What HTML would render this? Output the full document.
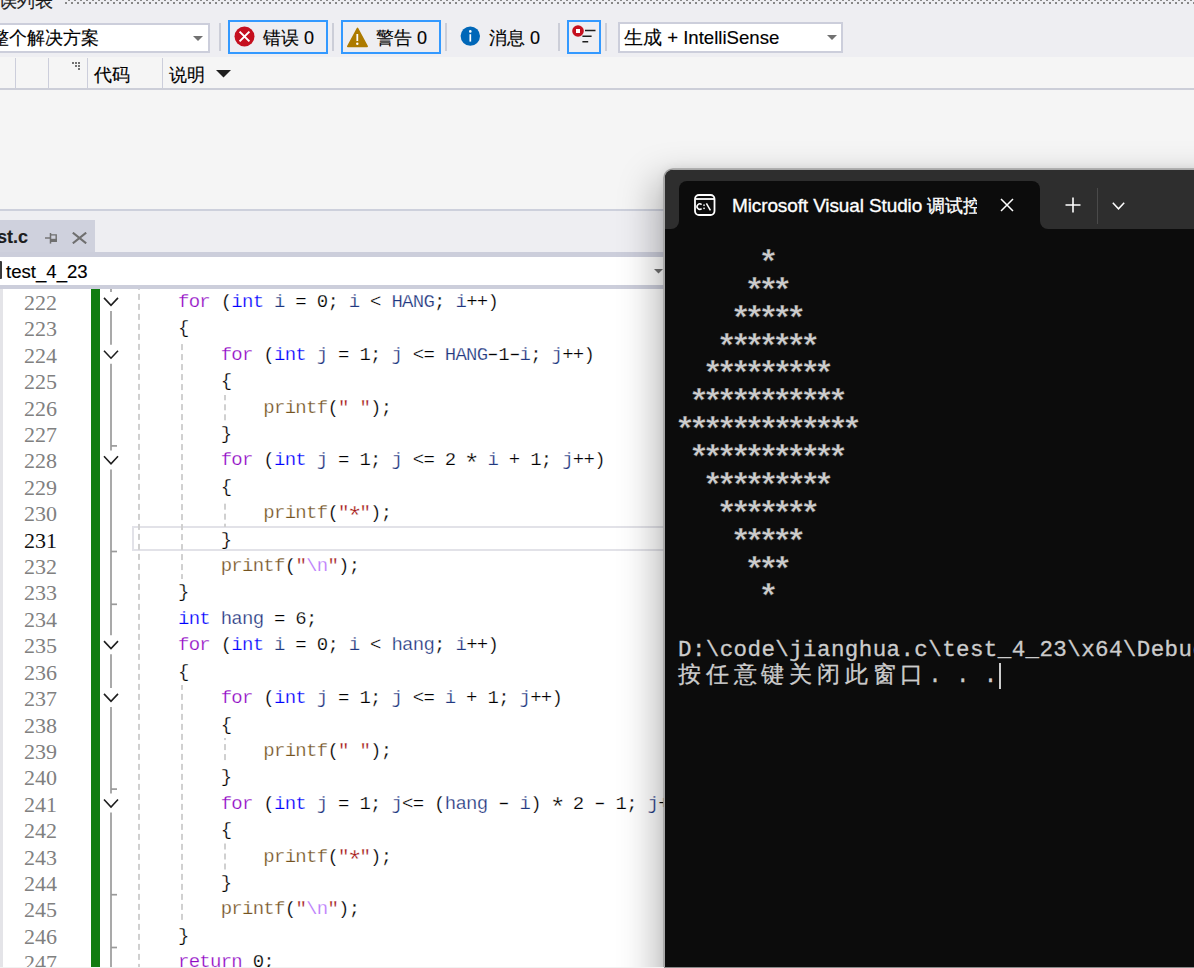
<!DOCTYPE html>
<html><head><meta charset="utf-8">
<style>
*{margin:0;padding:0;box-sizing:border-box}
html,body{width:1194px;height:968px;overflow:hidden;background:#f5f5f5;font-family:"Liberation Sans",sans-serif;position:relative}
.a{position:absolute}
#top{left:0;top:0;width:1194px;height:57px;background:#eeeef2}
.grip{left:64px;top:2px;width:1130px;height:2px;background-image:radial-gradient(circle,#8c8c94 0.6px,transparent 0.9px);background-size:4px 4px;background-position:0 -1px}
.ui{font-size:18px;color:#000;-webkit-text-stroke:0.15px #000;white-space:nowrap;line-height:20px}
.dd{background:#fff;border:2px solid #cccedb}
.sep{width:2px;background:#ccced8}
.btn{border:2px solid #3399ff}
#hdr{left:0;top:57px;width:1194px;height:32.5px;background:#f5f5f5;border-bottom:2px solid #ccced8}
.col{top:1px;width:1px;height:30px;background:#cccedb}
#split{left:0;top:209px;width:1194px;height:2px;background:#cdd0dc}
#tabrow{left:0;top:211px;width:1194px;height:41px;background:#eeeef2}
#tab{left:0;top:220px;width:95px;height:33px;background:#cfd1dd}
.strip{left:0;width:1194px;background:#cccedb}
#nav{left:0;top:257px;width:1194px;height:28px;background:#fff}
#editor{left:0;top:289px;width:1194px;height:679px;background:#fff}
.code{font-family:"Liberation Mono",monospace;font-size:19px;letter-spacing:-0.73px;white-space:pre;line-height:26.4px;color:#000;-webkit-text-stroke:0.25px #fff}
.ast{display:inline-block;transform:translateY(5px) scale(1.4)}.min{display:inline-block;transform:scaleX(1.6)}.kw{color:#8f08c4}.id{color:#1f377f}.ty{color:#0000ff}.fn{color:#74531f}.st{color:#a31515}.es{color:#b776fb}
.ln{font-family:"Liberation Serif",serif;font-size:22px;color:#808080;line-height:26.4px;text-align:right;white-space:pre}
#con{left:664px;top:169px;width:700px;height:850px;background:#0c0c0c;border-radius:9px 0 0 0;border-left:1px solid #a8a8a8;border-top:1px solid #a8a8a8;box-shadow:0 0 0 0.8px #a0a0a0,-10px 10px 36px rgba(0,0,0,0.26),0 0 10px rgba(0,0,0,0.08)}
.guide{width:2px;background-image:linear-gradient(#d0d0d0 60%,transparent 60%);background-size:2px 10px}
.ct{font-family:"Liberation Mono",monospace;font-size:22.5px;letter-spacing:0.4px;color:#cccccc;-webkit-text-stroke:0.3px #cccccc;white-space:pre;line-height:28px}
.cj{display:inline-block;width:27.8px;letter-spacing:0;font-size:23px}
.star{font-family:"Liberation Mono",monospace;font-size:34px;font-weight:bold;letter-spacing:-6.5px;margin-left:-3.2px;margin-top:5.5px;-webkit-text-stroke:0.35px #0c0c0c;color:#cccccc;white-space:pre;line-height:28px}
</style></head><body>
<div class="a" id="top">
  <div class="a ui" style="left:-1.5px;top:-9.5px;color:#1e1e1e">误列表</div>
  <svg class="a" style="left:64px;top:0" width="1130" height="6"><defs><pattern id="gp" width="6" height="6" patternUnits="userSpaceOnUse"><rect x="1" y="2" width="2" height="2" fill="#888"/><rect x="4" y="-1" width="2" height="2" fill="#888"/></pattern></defs><rect width="1130" height="6" fill="url(#gp)"/></svg>
  <div class="a dd" style="left:-20px;top:23px;width:230px;height:30px"></div>
  <div class="a ui" style="left:-9px;top:28px">整个解决方案</div>
  <svg class="a" style="left:193px;top:36px" width="10" height="6"><path d="M0 0H10L5 5Z" fill="#717171"/></svg>
  <div class="a sep" style="left:219px;top:23px;height:28px"></div>
  <div class="a btn" style="left:228px;top:20px;width:100px;height:34px"></div>
  <svg class="a" style="left:234px;top:26px" width="21" height="21"><circle cx="10.5" cy="10.5" r="10" fill="#c50f1f"/><path d="M5.6 5.6L15.4 15.4M15.4 5.6L5.6 15.4" stroke="#fff" stroke-width="2"/></svg>
  <div class="a ui" style="left:263px;top:28px">错误 0</div>
  <div class="a sep" style="left:332px;top:23px;height:28px"></div>
  <div class="a btn" style="left:341px;top:20px;width:100px;height:34px"></div>
  <svg class="a" style="left:346px;top:26px" width="23" height="22"><path d="M11.5 2.4L21.2 20.4H1.8Z" fill="#ad7b00" stroke="#ad7b00" stroke-width="1.6" stroke-linejoin="round"/><path d="M11.3 8V15" stroke="#fff" stroke-width="1.8"/><circle cx="11.3" cy="17.8" r="1.2" fill="#fff"/></svg>
  <div class="a ui" style="left:376px;top:28px">警告 0</div>
  <div class="a sep" style="left:445px;top:23px;height:28px"></div>
  <svg class="a" style="left:460px;top:26px" width="21" height="21"><circle cx="10.3" cy="10.1" r="9.7" fill="#0067b8"/><path d="M10.3 8.2V15.6" stroke="#fff" stroke-width="1.7"/><circle cx="10.3" cy="5.4" r="1.3" fill="#fff"/></svg>
  <div class="a ui" style="left:489px;top:28px">消息 0</div>
  <div class="a sep" style="left:558px;top:23px;height:28px"></div>
  <div class="a btn" style="left:567px;top:20px;width:34px;height:34px"></div>
  <svg class="a" style="left:571px;top:24px" width="28" height="24"><circle cx="7" cy="7" r="5.8" fill="#c50f1f"/><rect x="5" y="5" width="4" height="4" fill="#fff"/><path d="M14 6.5H24.5M11.4 12.3H20.6M11.4 17.8H17.2" stroke="#1e1e1e" stroke-width="1.5"/></svg>
  <div class="a sep" style="left:605px;top:23px;height:28px"></div>
  <div class="a dd" style="left:618px;top:22px;width:225px;height:31px"></div>
  <div class="a ui" style="left:624px;top:28px;font-size:18.6px">生成 + IntelliSense</div>
  <svg class="a" style="left:827px;top:35px" width="10" height="6"><path d="M0 0H10L5 5Z" fill="#717171"/></svg>
</div>
<div class="a" id="hdr">
  <div class="a col" style="left:15px"></div>
  <div class="a col" style="left:48px"></div>
  <div class="a col" style="left:87px"></div>
  <div class="a col" style="left:162px"></div>
  <svg class="a" style="left:72px;top:5px" width="9" height="8"><rect x="0" y="0" width="2" height="2" fill="#717171"/><rect x="3" y="0" width="2" height="2" fill="#717171"/><rect x="6" y="0" width="2" height="2" fill="#717171"/><rect x="3" y="3" width="2" height="2" fill="#717171"/><rect x="6" y="3" width="2" height="2" fill="#717171"/><rect x="6" y="6" width="2" height="2" fill="#717171"/></svg>
  <div class="a ui" style="left:94px;top:8px">代码</div>
  <div class="a ui" style="left:169px;top:8px">说明</div>
  <svg class="a" style="left:216px;top:13px" width="15" height="8"><path d="M0 0H15L7.5 7.5Z" fill="#1e1e1e"/></svg>
</div>
<div class="a" id="split"></div>
<div class="a" id="tabrow"></div>
<div class="a" id="tab">
  <div class="a ui" style="left:-3px;top:7px;font-weight:bold;color:#1e1e1e">st.c</div>
  <svg class="a" style="left:45px;top:12px" width="13" height="13"><path d="M0 6H5" stroke="#6f6f6f" stroke-width="1.4"/><path d="M5.5 1V11.6" stroke="#6f6f6f" stroke-width="1.5"/><path d="M5.5 2.9H11.2V9.3H5.5" stroke="#6f6f6f" stroke-width="1.4" fill="none"/><rect x="5.5" y="6.8" width="6.4" height="3" fill="#6f6f6f"/></svg>
  <svg class="a" style="left:72px;top:12px" width="15" height="12"><path d="M0.8 0.6L14.2 11.4M14.2 0.6L0.8 11.4" stroke="#6f6f6f" stroke-width="2"/></svg>
</div>
<div class="a strip" style="top:252px;height:5px"></div>
<div class="a" id="nav">
  <div class="a" style="left:-1px;top:4px;width:2.5px;height:18px;background:#3a3a3a;border-radius:1px"></div>
  <div class="a ui" style="left:6px;top:5px;font-size:18.6px">test_4_23</div>
  <svg class="a" style="left:654px;top:12px" width="9" height="5"><path d="M0 0H9L4.5 4.5Z" fill="#717171"/></svg>
</div>
<div class="a strip" style="top:285px;height:4px"></div>
<div class="a" id="editor">
<div class="a" style="left:0;top:0;width:3px;height:679px;background:#e4e4e8"></div>
<div class="a ln" style="left:0;top:1px;width:57px">222
223
224
225
226
227
228
229
230
<span style="color:#111">231</span>
232
233
234
235
236
237
238
239
240
241
242
243
244
245
246
247</div>
<div class="a" style="left:91px;top:0;width:9px;height:679px;background:#107c10"></div>
<div class="a" style="left:132px;top:237.1px;width:540px;height:25px;border:2px solid #e2e2e8"></div>
<svg class="a" style="left:100px;top:0" width="24" height="679"><path d="M11 0.0V3.0" stroke="#9a9a9a" stroke-width="1.7"/><path d="M11 22.0V55.8" stroke="#9a9a9a" stroke-width="1.7"/><path d="M11 74.8V161.4" stroke="#9a9a9a" stroke-width="1.7"/><path d="M11 180.4V346.2" stroke="#9a9a9a" stroke-width="1.7"/><path d="M11 365.2V399.0" stroke="#9a9a9a" stroke-width="1.7"/><path d="M11 418.0V504.6" stroke="#9a9a9a" stroke-width="1.7"/><path d="M11 523.6V679.0" stroke="#9a9a9a" stroke-width="1.7"/><path d="M4 8.9L11 16.4L18 8.9" stroke="#1e1e1e" stroke-width="1.6" fill="none"/><path d="M4 61.7L11 69.2L18 61.7" stroke="#1e1e1e" stroke-width="1.6" fill="none"/><path d="M4 167.3L11 174.8L18 167.3" stroke="#1e1e1e" stroke-width="1.6" fill="none"/><path d="M4 352.1L11 359.6L18 352.1" stroke="#1e1e1e" stroke-width="1.6" fill="none"/><path d="M4 404.9L11 412.4L18 404.9" stroke="#1e1e1e" stroke-width="1.6" fill="none"/><path d="M4 510.5L11 518.0L18 510.5" stroke="#1e1e1e" stroke-width="1.6" fill="none"/><path d="M11 156.9H17" stroke="#9a9a9a" stroke-width="1.7"/><path d="M11 262.5H17" stroke="#9a9a9a" stroke-width="1.7"/><path d="M11 315.3H17" stroke="#9a9a9a" stroke-width="1.7"/><path d="M11 500.1H17" stroke="#9a9a9a" stroke-width="1.7"/><path d="M11 605.7H17" stroke="#9a9a9a" stroke-width="1.7"/><path d="M11 658.5H17" stroke="#9a9a9a" stroke-width="1.7"/></svg>
<div class="a guide" style="left:138.0px;top:0.0px;height:686.4px;background-position:0 4.9px"></div>
<div class="a guide" style="left:181.0px;top:52.8px;height:237.6px;background-position:0 2.1px"></div>
<div class="a guide" style="left:181.0px;top:396.0px;height:237.6px;background-position:0 8.9px"></div>
<div class="a guide" style="left:223.5px;top:105.6px;height:26.4px;background-position:0 9.3px"></div>
<div class="a guide" style="left:223.5px;top:211.2px;height:26.4px;background-position:0 3.7px"></div>
<div class="a guide" style="left:223.5px;top:448.8px;height:26.4px;background-position:0 6.1px"></div>
<div class="a guide" style="left:223.5px;top:554.4px;height:26.4px;background-position:0 0.5px"></div>
<div class="a code" style="left:135.3px;top:0">    <span class="kw">for</span> (<span class="ty">int</span> <span class="id">i</span> = 0; <span class="id">i</span> &lt; <span class="id">HANG</span>; <span class="id">i</span>++)
    {
        <span class="kw">for</span> (<span class="ty">int</span> <span class="id">j</span> = 1; <span class="id">j</span> &lt;= <span class="id">HANG</span><span class="min">-</span>1<span class="min">-</span><span class="id">i</span>; <span class="id">j</span>++)
        {
            <span class="fn">printf</span>(<span class="st">" "</span>);
        }
        <span class="kw">for</span> (<span class="ty">int</span> <span class="id">j</span> = 1; <span class="id">j</span> &lt;= 2 <span class="ast">*</span> <span class="id">i</span> + 1; <span class="id">j</span>++)
        {
            <span class="fn">printf</span>(<span class="st">"<span class="ast">*</span>"</span>);
        }
        <span class="fn">printf</span>(<span class="st">"</span><span class="es">\n</span><span class="st">"</span>);
    }
    <span class="ty">int</span> <span class="id">hang</span> = 6;
    <span class="kw">for</span> (<span class="ty">int</span> <span class="id">i</span> = 0; <span class="id">i</span> &lt; <span class="id">hang</span>; <span class="id">i</span>++)
    {
        <span class="kw">for</span> (<span class="ty">int</span> <span class="id">j</span> = 1; <span class="id">j</span> &lt;= <span class="id">i</span> + 1; <span class="id">j</span>++)
        {
            <span class="fn">printf</span>(<span class="st">" "</span>);
        }
        <span class="kw">for</span> (<span class="ty">int</span> <span class="id">j</span> = 1; <span class="id">j</span>&lt;= (<span class="id">hang</span> <span class="min">-</span> <span class="id">i</span>) <span class="ast">*</span> 2 <span class="min">-</span> 1; <span class="id">j</span>++)
        {
            <span class="fn">printf</span>(<span class="st">"<span class="ast">*</span>"</span>);
        }
        <span class="fn">printf</span>(<span class="st">"</span><span class="es">\n</span><span class="st">"</span>);
    }
    <span class="kw">return</span> 0;</div>
</div>
<div class="a" id="con">
  <div class="a" style="left:0;top:0;width:540px;height:59px;background:#2e2e2e;border-radius:8px 0 0 0"></div>
  <div class="a" style="left:14px;top:11px;width:361px;height:61px;background:#0c0c0c;border-radius:8px 8px 0 0"></div>
  <div class="a" style="left:375px;top:51px;width:8px;height:8px;background:#0c0c0c"></div>
  <div class="a" style="left:375px;top:51px;width:8px;height:8px;background:#2e2e2e;border-radius:0 0 0 8px"></div>
  <div class="a" style="left:0px;top:51px;width:14px;height:8px;background:#0c0c0c"></div>
  <div class="a" style="left:0px;top:51px;width:14px;height:8px;background:#2e2e2e;border-radius:0 0 8px 0"></div>
  <svg class="a" style="left:29px;top:24px" width="22" height="22"><rect x="1" y="1" width="19.5" height="20" rx="4" fill="none" stroke="#fff" stroke-width="1.8"/><path d="M1.5 5H20" stroke="#fff" stroke-width="1.8"/><path d="M7.6 10.6A2.7 2.7 0 1 0 7.6 14.6" stroke="#fff" stroke-width="1.6" fill="none"/><rect x="9.3" y="10.4" width="1.5" height="1.5" fill="#fff"/><rect x="9.3" y="13.6" width="1.5" height="1.5" fill="#fff"/><path d="M12.4 9.4L16.4 16.4" stroke="#fff" stroke-width="1.5"/></svg>
  <div class="a" style="left:67px;top:25px;width:245px;overflow:hidden;font-size:19px;letter-spacing:-0.12px;line-height:22px;color:#fff;white-space:nowrap;-webkit-text-stroke:0.35px #fff">Microsoft Visual Studio <span style="font-size:17.5px;letter-spacing:-0.3px">调试控</span></div>
  <svg class="a" style="left:335px;top:28px" width="14" height="14"><path d="M1 1L13 13M13 1L1 13" stroke="#fff" stroke-width="1.5"/></svg>
  <svg class="a" style="left:400px;top:27px" width="16" height="16"><path d="M8 0.5V15.5M0.5 8H15.5" stroke="#fff" stroke-width="1.6"/></svg>
  <div class="a" style="left:432px;top:18px;width:1px;height:36px;background:#4a4a4a"></div>
  <svg class="a" style="left:447px;top:32px" width="13" height="8"><path d="M0.8 0.8L6.5 6.8L12.2 0.8" stroke="#fff" stroke-width="1.5" fill="none"/></svg>
  <div class="a star" style="left:96.4px;top:74.5px">*</div>
  <div class="a star" style="left:82.5px;top:102.4px">***</div>
  <div class="a star" style="left:68.6px;top:130.2px">*****</div>
  <div class="a star" style="left:54.7px;top:158.1px">*******</div>
  <div class="a star" style="left:40.8px;top:185.9px">*********</div>
  <div class="a star" style="left:26.9px;top:213.8px">***********</div>
  <div class="a star" style="left:13.0px;top:241.7px">*************</div>
  <div class="a star" style="left:26.9px;top:269.5px">***********</div>
  <div class="a star" style="left:40.8px;top:297.4px">*********</div>
  <div class="a star" style="left:54.7px;top:325.2px">*******</div>
  <div class="a star" style="left:68.6px;top:353.1px">*****</div>
  <div class="a star" style="left:82.5px;top:381.0px">***</div>
  <div class="a star" style="left:96.4px;top:408.8px">*</div>
  <div class="a ct" style="left:13px;top:465.5px">D:\code\jianghua.c\test_4_23\x64\Debug\test_4_23.exe</div>
  <div class="a ct" style="left:13px;top:492px"><span class="cj">按</span><span class="cj">任</span><span class="cj">意</span><span class="cj">键</span><span class="cj">关</span><span class="cj">闭</span><span class="cj">此</span><span class="cj">窗</span><span class="cj">口</span>. . .</div>
  <div class="a" style="left:334.0px;top:493px;width:2px;height:26px;background:#cccccc"></div>
</div>
<div class="a" style="left:0;top:967px;width:664px;height:1px;background:#f2f2f2"></div><div class="a" style="left:664px;top:967px;width:530px;height:1px;background:#8a8a8a"></div>
</body></html>
